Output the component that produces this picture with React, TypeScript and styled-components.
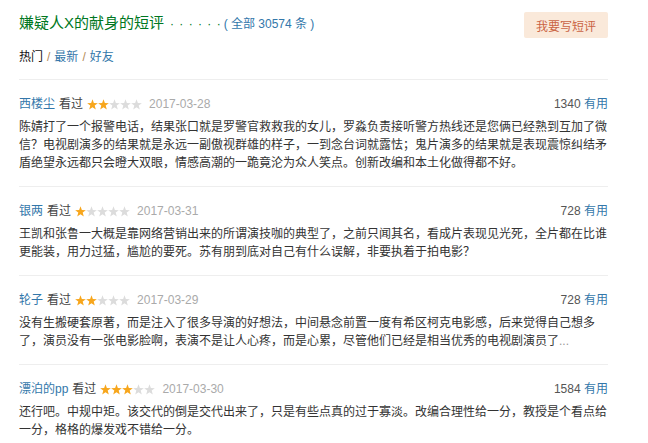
import React from 'react';
import styled, { createGlobalStyle } from 'styled-components';

const GlobalStyle = createGlobalStyle`
	body {
		margin: 0;
		background: #fff;
		font-family: "Liberation Sans", "Noto Sans CJK SC", sans-serif;
		font-size: 12px;
		color: #333;
	}
`;

const Page = styled.div`
	width: 589px;
	padding-left: 19px;
`;

const HeadRow = styled.div`
	display: flex;
	justify-content: space-between;
	align-items: flex-start;
	padding-top: 12px;
`;

const Title = styled.h2`
	margin: 0;
	display: flex;
	align-items: baseline;
	font-size: 15px;
	font-weight: normal;
	line-height: 22px;
	color: #072;
`;

const Dots = styled.span`
	font-size: 12px;
	letter-spacing: 1px;
	color: #072;
	margin-left: 6px;
	margin-right: 2px;
`;

const Total = styled.a`
	font-size: 12px;
	color: #37a;
`;

const WriteButton = styled.a`
	display: flex;
	align-items: center;
	height: 26px;
	padding: 0 12px;
	border-radius: 2px;
	background: #fae9da;
	color: #ca6445;
	font-size: 12px;
	cursor: pointer;
`;

const Tabs = styled.div`
	display: flex;
	align-items: center;
	gap: 4px;
	margin-top: 10px;
	line-height: 18px;
	padding-bottom: 13px;
`;

const Tab = styled.a<{ $active?: boolean }>`
	color: ${(p) => (p.$active ? '#111' : '#37a')};
`;

const Slash = styled.span`
	color: #b58a55;
`;

const Comment = styled.div`
	border-top: 1px solid #eee;
	padding: 15px 0 14px;
`;

const CommentHead = styled.div`
	display: flex;
	align-items: center;
	line-height: 18px;
	gap: 4px;
`;

const User = styled.a`
	color: #37a;
`;

const Watched = styled.span`
	color: #444;
`;

const Date = styled.span`
	color: #aaa;
	margin-left: 3px;
`;

const Votes = styled.span`
	margin-left: auto;
	color: #555;
`;

const Useful = styled.a`
	color: #37a;
`;

const Body = styled.p`
	margin: 5px 0 0;
	line-height: 18px;
	white-space: nowrap;
`;

const More = styled.span`
	color: #999;
`;

function Stars({ count }: { count: number }) {
	const star = 'M5.5 0.3 L6.85 4.04 L10.83 4.17 L7.69 6.61 L8.79 10.43 L5.5 8.2 L2.21 10.43 L3.31 6.61 L0.17 4.17 L4.15 4.04 Z';
	return (
		<svg width="55" height="11" viewBox="0 0 55 11">
			{[0, 1, 2, 3, 4].map((i) => (
				<path key={i} d={star} transform={`translate(${i * 11} 0)`} fill={i < count ? '#f7a61c' : '#dcdcdc'} />
			))}
		</svg>
	);
}

const comments = [
	{
		user: '西楼尘', stars: 2, date: '2017-03-28', votes: 1340,
		lines: [
			'陈婧打了一个报警电话，结果张口就是罗警官救救我的女儿，罗淼负责接听警方热线还是您俩已经熟到互加了微',
			'信？电视剧演多的结果就是永远一副傲视群雄的样子，一到念台词就露怯；鬼片演多的结果就是表现震惊纠结矛',
			'盾绝望永远都只会瞪大双眼，情感高潮的一跪竟沦为众人笑点。创新改编和本土化做得都不好。',
		],
	},
	{
		user: '银两', stars: 1, date: '2017-03-31', votes: 728,
		lines: [
			'王凯和张鲁一大概是靠网络营销出来的所谓演技咖的典型了，之前只闻其名，看成片表现见光死，全片都在比谁',
			'更能装，用力过猛，尴尬的要死。苏有朋到底对自己有什么误解，非要执着于拍电影？',
		],
	},
	{
		user: '轮子', stars: 2, date: '2017-03-29', votes: 728, more: true,
		lines: [
			'没有生搬硬套原著，而是注入了很多导演的好想法，中间悬念前置一度有希区柯克电影感，后来觉得自己想多',
			'了，演员没有一张电影脸啊，表演不是让人心疼，而是心累，尽管他们已经是相当优秀的电视剧演员了',
		],
	},
	{
		user: '漂泊的pp', stars: 3, date: '2017-03-30', votes: 1584,
		lines: [
			'还行吧。中规中矩。该交代的倒是交代出来了，只是有些点真的过于寡淡。改编合理性给一分，教授是个看点给',
			'一分，格格的爆发戏不错给一分。',
		],
	},
];

export default function App() {
	return (
		<Page>
			<GlobalStyle />
			<HeadRow>
				<Title>
					嫌疑人X的献身的短评
					<Dots>· · · · · ·</Dots>
					<Total>( 全部 30574 条 )</Total>
				</Title>
				<WriteButton>我要写短评</WriteButton>
			</HeadRow>
			<Tabs>
				<Tab $active>热门</Tab>
				<Slash>/</Slash>
				<Tab>最新</Tab>
				<Slash>/</Slash>
				<Tab>好友</Tab>
			</Tabs>
			{comments.map((c) => (
				<Comment key={c.user}>
					<CommentHead>
						<User>{c.user}</User>
						<Watched>看过</Watched>
						<Stars count={c.stars} />
						<Date>{c.date}</Date>
						<Votes>{c.votes} <Useful>有用</Useful></Votes>
					</CommentHead>
					<Body>
						{c.lines.map((l, i) => (
							<React.Fragment key={i}>
								{i > 0 && <br />}
								{l}
							</React.Fragment>
						))}
						{c.more && <More>...</More>}
					</Body>
				</Comment>
			))}
		</Page>
	);
}
